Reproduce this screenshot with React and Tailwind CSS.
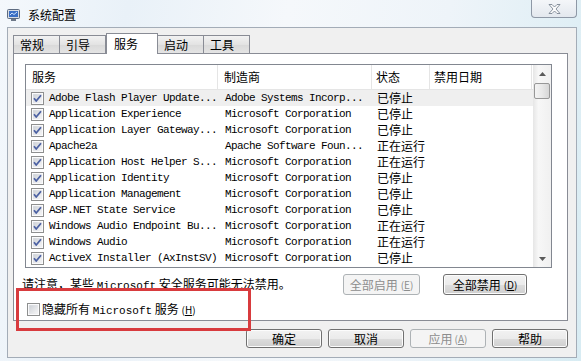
import React from 'react';

const rows = [
  ['Adobe Flash Player Update...', 'Adobe Systems Incorp...', '已停止'],
  ['Application Experience', 'Microsoft Corporation', '已停止'],
  ['Application Layer Gateway...', 'Microsoft Corporation', '已停止'],
  ['Apache2a', 'Apache Software Foun...', '正在运行'],
  ['Application Host Helper S...', 'Microsoft Corporation', '正在运行'],
  ['Application Identity', 'Microsoft Corporation', '已停止'],
  ['Application Management', 'Microsoft Corporation', '已停止'],
  ['ASP.NET State Service', 'Microsoft Corporation', '已停止'],
  ['Windows Audio Endpoint Bu...', 'Microsoft Corporation', '正在运行'],
  ['Windows Audio', 'Microsoft Corporation', '正在运行'],
  ['ActiveX Installer (AxInstSV)', 'Microsoft Corporation', '已停止'],
];

const tabs = ['常规', '引导', '服务', '启动', '工具'];

const cjk = "font-['Microsoft_YaHei','Noto_Sans_CJK_SC',sans-serif]";
const mono = "font-['Liberation_Mono','Noto_Sans_CJK_SC',monospace]";

const CheckBox = ({ checked }) => (
  <svg width="13" height="13" viewBox="0 0 13 13" className="shrink-0">
    <defs>
      <linearGradient id={checked ? 'cbOn' : 'cbOff'} x1="0" y1="0" x2="1" y2="1">
        <stop offset="0" stopColor="#cbcfd5" />
        <stop offset="1" stopColor="#f7f7f7" />
      </linearGradient>
    </defs>
    <rect x="0.5" y="0.5" width="12" height="12" fill="#fff" stroke="#8e8f8f" />
    <rect x="2" y="2" width="9" height="9" fill={`url(#${checked ? 'cbOn' : 'cbOff'})`} stroke="#e9ebee" strokeWidth="0.5" />
    {checked && (
      <path d="M3 6.3 L5.2 9 L10 3.2" fill="none" stroke="#4c61a3" strokeWidth="1.8" strokeLinejoin="round" />
    )}
  </svg>
);

const Button = ({ children, disabled, className = '' }) => (
  <div
    className={
      'h-[21px] rounded-[3px] border flex items-center justify-center text-[12px] ' +
      cjk +
      ' ' +
      (disabled
        ? 'border-[#adb2b5] bg-[#f4f4f4] text-[#8d8d8d]'
        : 'border-[#707070] bg-[linear-gradient(#f2f2f2_0%,#ebebeb_50%,#dddddd_51%,#cfcfcf_100%)] text-black shadow-[inset_0_0_0_1px_#fcfcfc]') +
      ' ' +
      className
    }
  >
    {children}
  </div>
);

const App = () => {
  return (
    <div className="w-[581px] h-[361px] overflow-hidden relative bg-[linear-gradient(100deg,#f4f8fc_0%,#e9f1f8_20%,#f5f8fb_45%,#eef4f9_70%,#d8ecf3_100%)]">
      {/* Title bar */}
      <div className="h-[27px] flex items-start justify-between">
        <div className="flex items-center pl-[7px] pt-[6px] gap-[8px]">
          <svg width="13" height="12" viewBox="0 0 13 12">
            <rect x="0.5" y="0.5" width="12" height="9" rx="1" fill="#d7dce3" stroke="#5d6b80" />
            <rect x="2" y="2" width="9" height="6" fill="#3b6fc4" />
            <path d="M3 6 L5 4 L7 5.5 L10 3" stroke="#cfe4ff" strokeWidth="1" fill="none" />
            <rect x="4" y="10" width="5" height="2" fill="#6d7888" />
          </svg>
          <span className={'text-[12px] text-black ' + cjk}>系统配置</span>
        </div>
        <div className="w-[46px] h-[18px] mr-[4px] rounded-b-[4px] border border-t-0 border-[#8e98a6] bg-[linear-gradient(#f4f6f9,#e3e8ee)] flex items-center justify-center">
          <svg width="13" height="10" viewBox="0 0 13 10">
            <path
              d="M1 0.5 H4 L6.5 3 L9 0.5 H12 L8 5 L12 9.5 H9 L6.5 7 L4 9.5 H1 L5 5 Z"
              fill="#fdfdfd"
              stroke="#6f7a88"
              strokeWidth="0.8"
            />
          </svg>
        </div>
      </div>

      {/* Client area */}
      <div className="ml-[7px] w-[570px] h-[331px] border border-[#a3acb7] bg-[#f0f0f0] flex flex-col">
        {/* Tabs */}
        <div className="mt-[5px] ml-[5px] h-[20px] flex items-end relative z-10">
          {tabs.map((t) => {
            const active = t === '服务';
            return active ? (
              <div
                key={t}
                className={
                  'w-[52px] h-[21px] -mb-px border border-b-0 border-[#898c95] bg-white pl-[7px] pt-[1px] text-[12px] ' + cjk
                }
              >
                {t}
              </div>
            ) : (
              <div
                key={t}
                className={
                  'w-[47px] h-[18px] border border-b-0 border-[#898c95] -ml-px first:ml-0 bg-[linear-gradient(#f2f2f2,#e3e3e3_50%,#d9d9d9_51%,#e4e4e4)] pl-[6px] text-[12px] leading-[17px] ' +
                  cjk
                }
              >
                {t}
              </div>
            );
          })}
        </div>

        {/* Panel */}
        <div className="ml-[5px] w-[555px] h-[268px] border border-[#898c95] bg-white flex flex-col px-[11px] pt-[10px]">
          {/* List */}
          <div className="w-[527px] h-[204px] border border-[#828790] bg-white flex">
            <div className="flex-1 flex flex-col">
              <div className={'h-[25px] flex text-[12px] border-b border-[#e5e5e5] ' + cjk}>
                <div className="w-[192px] pl-[6px] flex items-center border-r border-[#e5e5e5]">服务</div>
                <div className="w-[154px] pl-[6px] flex items-center border-r border-[#e5e5e5]">制造商</div>
                <div className="w-[58px] pl-[4px] flex items-center border-r border-[#e5e5e5]">状态</div>
                <div className="w-[102px] pl-[4px] flex items-center border-r border-[#e5e5e5]">禁用日期</div>
              </div>
              {rows.map((r, i) => (
                <div key={i} className={'h-[16px] flex items-center ' + (i === 0 ? 'bg-[#efefef]' : '')}>
                  <div className="w-[192px] pl-[5px] flex items-center gap-[5px]">
                    <CheckBox checked />
                    <span className={'text-[11px] tracking-[-0.6px] whitespace-nowrap ' + mono}>{r[0]}</span>
                  </div>
                  <div className={'w-[154px] pl-[7px] text-[11px] tracking-[-0.6px] whitespace-nowrap ' + mono}>{r[1]}</div>
                  <div className={'w-[160px] pl-[5px] text-[12px] leading-[16px] ' + cjk}>{r[2]}</div>
                </div>
              ))}
            </div>
            {/* Scrollbar */}
            <div className="w-[18px] bg-[linear-gradient(90deg,#e6e6e6,#f7f7f7_30%,#f0f0f0)] flex flex-col items-center">
              <div className="h-[18px] flex items-center justify-center">
                <svg width="7" height="4" viewBox="0 0 7 4">
                  <path d="M0 4 L3.5 0 L7 4 Z" fill="#5a5a5a" />
                </svg>
              </div>
              <div className="w-[16px] h-[16px] rounded-[2px] border border-[#979797] bg-[linear-gradient(90deg,#f3f3f3,#e8e8e8_50%,#d6d6d6)]" />
              <div className="flex-1" />
              <div className="h-[17px] flex items-center justify-center">
                <svg width="7" height="4" viewBox="0 0 7 4">
                  <path d="M0 0 L3.5 4 L7 0 Z" fill="#5a5a5a" />
                </svg>
              </div>
            </div>
          </div>

          {/* Note and buttons */}
          <div className="flex items-start mt-[6px]">
            <div className={'text-[12px] pt-[1px] -ml-[3px] whitespace-nowrap ' + cjk}>
              请注意，某些 <span className={mono + ' text-[11px]'}>Microsoft</span> 安全服务可能无法禁用。
            </div>
            <div className="flex-1" />
            <Button disabled className="w-[77px]">
              全部启用 <span className="text-[10px] ml-[3px]">(<u>E</u>)</span>
            </Button>
            <Button className="w-[84px] ml-[23px] mr-[29px]">
              全部禁用 <span className="text-[10px] ml-[3px]">(<u>D</u>)</span>
            </Button>
          </div>
        </div>

        {/* Bottom buttons */}
        <div className="flex justify-end gap-[6px] mt-[8px] mr-[8px]">
          <Button className="w-[76px] !h-[19px]">确定</Button>
          <Button className="w-[76px] !h-[19px]">取消</Button>
          <Button disabled className="w-[76px] !h-[19px]">
            应用 <span className="text-[10px] ml-[2px]">(<u>A</u>)</span>
          </Button>
          <Button className="w-[76px] !h-[19px]">帮助</Button>
        </div>
      </div>

      {/* Annotation box */}
      <div className="absolute left-[16px] top-[288px] w-[235px] h-[43px] border-[3px] border-[#d83b3e]">
        <div className="flex items-center gap-[2px] pl-[8px] pt-[9px]">
          <CheckBox checked={false} />
          <span className={'text-[12px] ' + cjk}>
            隐藏所有 <span className={mono + ' text-[11px]'}>Microsoft</span> 服务 <span className="text-[10px]">(<u>H</u>)</span>
          </span>
        </div>
      </div>
    </div>
  );
};

export default App;
